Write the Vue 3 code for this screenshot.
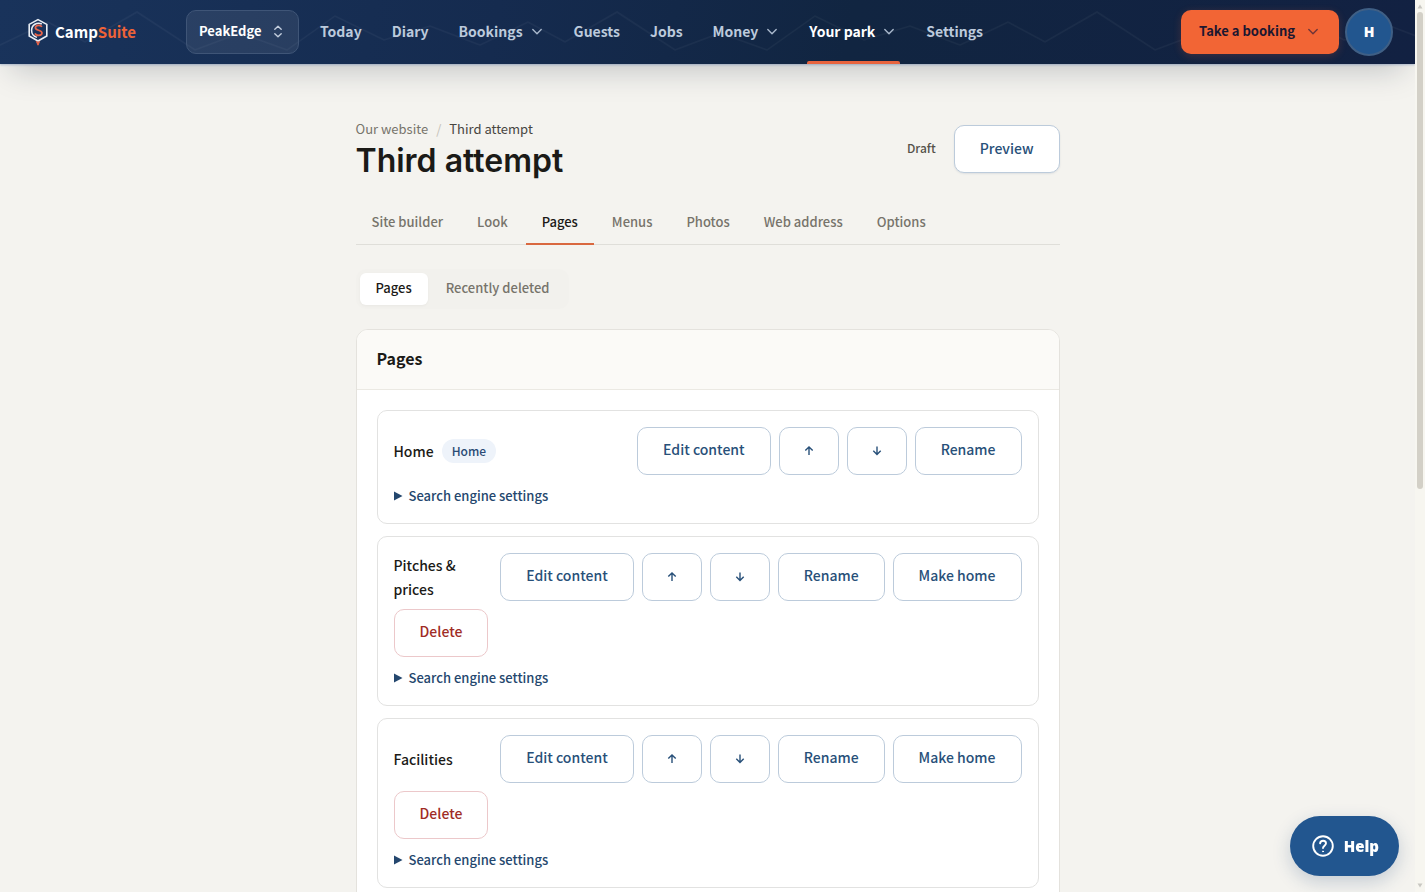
<script setup>
const nav = [
  { label: 'Today' },
  { label: 'Diary' },
  { label: 'Bookings', menu: true },
  { label: 'Guests' },
  { label: 'Jobs' },
  { label: 'Money', menu: true },
  { label: 'Your park', menu: true, active: true },
  { label: 'Settings' },
]
const tabs = ['Site builder', 'Look', 'Pages', 'Menus', 'Photos', 'Web address', 'Options']
const pages = [
  { name: 'Home', home: true },
  { name: 'Pitches & prices' },
  { name: 'Facilities' },
]
</script>

<template>
  <div class="app">
    <header class="topbar">
      <svg class="ridge" aria-hidden="true">
        <defs>
          <pattern id="ridge" width="480" height="64" patternUnits="userSpaceOnUse">
            <path d="M0 45 L48 22 L85 42 L137 12 L195 50 L240 33 L287 50 L335 16 L384 40 L430 26 L480 45" />
          </pattern>
        </defs>
        <rect width="100%" height="64" fill="url(#ridge)" />
      </svg>
      <a class="brand" href="#">
        <svg width="22" height="28" viewBox="0 0 22 28" fill="none" aria-hidden="true">
          <path d="M11 1.6 L19.8 6.4 V18 L11 23 L2.2 18 V6.4 Z" stroke="#e9eef5" stroke-width="1.6" />
          <path d="M14.8 6 C10 3.6 4.6 7 4.6 12.2 C4.6 16 7 18.6 10 19.4" stroke="#e9eef5" stroke-width="1.5" />
          <path d="M14.8 9 C13.8 6.6 8.4 6.7 8.4 9.7 C8.4 12.8 15 11.6 15 15 C15 18 9 18.2 8 15.4" stroke="#e8644a" stroke-width="1.7" />
          <path d="M9.4 23.4 L11 24.4 L12.6 23.4 L11 27.2 Z" fill="#e8644a" stroke="#e8644a" />
        </svg>
        <span>Camp<span class="accent">Suite</span></span>
      </a>
      <button class="park" type="button">
        PeakEdge
        <svg width="10" height="14" viewBox="0 0 10 14" fill="none" stroke="currentColor" stroke-width="1.4" stroke-linecap="round" stroke-linejoin="round" aria-hidden="true">
          <path d="M1.8 5.2 L5 2.2 L8.2 5.2 M1.8 9.8 L5 12.8 L8.2 9.8" />
        </svg>
      </button>
      <nav class="nav" aria-label="Main">
        <a v-for="n in nav" :key="n.label" href="#" :class="{ active: n.active, menu: n.menu }">
          {{ n.label }}
          <svg v-if="n.menu" class="chev" width="12" height="12" viewBox="0 0 12 12" aria-hidden="true"><path d="M1.8 4.6 L6 8.8 L10.2 4.6" /></svg>
        </a>
      </nav>
      <button class="book" type="button">
        Take a booking
        <svg class="chev" width="12" height="12" viewBox="0 0 12 12" aria-hidden="true"><path d="M1.8 4.6 L6 8.8 L10.2 4.6" /></svg>
      </button>
      <button class="avatar" type="button" aria-label="Account">H</button>
    </header>

    <main class="main">
      <div class="head">
        <div>
          <div class="crumbs"><a href="#">Our website</a><span class="sep">/</span><span>Third attempt</span></div>
          <h1>Third attempt</h1>
        </div>
        <div class="head-side">
          <span class="draft">Draft</span>
          <button class="btn preview" type="button">Preview</button>
        </div>
      </div>

      <nav class="tabs" aria-label="Website">
        <a v-for="t in tabs" :key="t" href="#" :class="{ active: t === 'Pages' }">{{ t }}</a>
      </nav>

      <div class="segment">
        <button type="button" class="on">Pages</button>
        <button type="button">Recently deleted</button>
      </div>

      <section class="card">
        <h2>Pages</h2>
        <ul>
          <li v-for="p in pages" :key="p.name">
            <div class="row">
              <div class="name">{{ p.name }}<span v-if="p.home" class="badge">Home</span></div>
              <button class="btn" type="button">Edit content</button>
              <button class="btn" type="button" aria-label="Move up">
                <svg class="arrow" width="8" height="16" viewBox="1 0 8 16" aria-hidden="true"><path d="M5 14 V6 M1.3 9.6 L5 5.9 L8.7 9.6" /></svg>
              </button>
              <button class="btn" type="button" aria-label="Move down">
                <svg class="arrow" width="8" height="16" viewBox="1 0 8 16" aria-hidden="true"><path d="M5 5.4 V13.4 M1.3 9.8 L5 13.5 L8.7 9.8" /></svg>
              </button>
              <button class="btn" type="button">Rename</button>
              <template v-if="!p.home">
                <button class="btn" type="button">Make home</button>
                <button class="btn danger" type="button">Delete</button>
              </template>
            </div>
            <details>
              <summary>
                <svg width="9" height="10" viewBox="0 0 9 10" aria-hidden="true"><path d="M0 0.5 L8.5 5 L0 9.5 Z" /></svg>
                Search engine settings
              </summary>
            </details>
          </li>
        </ul>
      </section>
    </main>

    <button class="help" type="button">
      <svg width="22" height="22" viewBox="0 0 22 22" fill="none" stroke="#fff" stroke-width="1.9" stroke-linecap="round" aria-hidden="true">
        <circle cx="11" cy="11" r="9.8" />
        <path d="M8.1 8.4 C8.3 4.8 14 4.9 14 8.3 C14 10.6 11 10.8 11 13.1" />
        <circle cx="11" cy="16.4" r="0.5" fill="#fff" stroke-width="1" />
      </svg>
      Help
    </button>

    <div class="scroll" aria-hidden="true">
      <svg width="6" height="5" viewBox="0 0 6 5"><path d="M3 0.5 L5.5 4.5 H0.5 Z" /></svg>
      <div class="track"><div class="thumb"></div></div>
      <svg width="6" height="5" viewBox="0 0 6 5"><path d="M3 4.5 L5.5 0.5 H0.5 Z" /></svg>
    </div>
  </div>
</template>

<style>
body {
  background: #f4f3ee;
}
</style>

<style scoped>
* {
  box-sizing: border-box;
}
.app {
  height: 100vh;
  overflow: hidden;
  padding-right: 10px;
  background: #f4f3ef;
  color: #1b1a17;
  font-family: "Noto Sans CJK SC", "Noto Sans", sans-serif;
  font-size: 14px;
  line-height: 20px;
}
a {
  color: inherit;
  text-decoration: none;
}
button {
  font: inherit;
  color: inherit;
  cursor: pointer;
  margin: 0;
}
.topbar {
  position: relative;
  display: flex;
  align-items: center;
  height: 64px;
  padding: 0 22px 0 27px;
  background: linear-gradient(100deg, #19335b 0%, #152b4f 35%, #112541 60%, #122142 100%);
  box-shadow: 0 1px 2px rgba(40, 80, 150, 0.3), 0 16px 32px -12px rgba(20, 30, 50, 0.25);
}
.ridge {
  position: absolute;
  inset: 0;
  width: 100%;
  height: 100%;
}
.ridge path {
  fill: none;
  stroke: rgba(255, 255, 255, 0.04);
  stroke-width: 1.5;
}
.topbar > :not(.ridge) {
  position: relative;
}
.brand {
  display: flex;
  align-items: center;
  gap: 6px;
  width: 159px;
  color: #fff;
  font-size: 15px;
  font-weight: 700;
}
.accent {
  color: #ee6338;
}
.park {
  display: flex;
  align-items: center;
  justify-content: space-between;
  width: 113px;
  height: 44px;
  padding: 0 15px 2px 12px;
  border: 1px solid #3f5577;
  border-radius: 10px;
  background: rgba(255, 255, 255, 0.08);
  color: #fff;
  font-size: 13px;
  font-weight: 700;
}
.park svg {
  color: #c3cede;
}
.nav {
  display: flex;
  gap: 2px;
  margin-left: 7px;
  flex: 1;
}
.nav a {
  position: relative;
  display: flex;
  align-items: center;
  gap: 8px;
  height: 64px;
  padding: 0 14px 2px;
  color: #bccadc;
  font-weight: 700;
  white-space: nowrap;
}
.nav a.menu {
  padding-right: 15px;
}
.nav a.active {
  color: #fff;
}
.nav a.active::after {
  content: "";
  position: absolute;
  left: 12px;
  right: 10px;
  bottom: 0;
  height: 3px;
  border-radius: 2px 2px 0 0;
  background: #e8643f;
}
.chev {
  fill: none;
  stroke: #a9b8cc;
  stroke-width: 1.4;
  stroke-linecap: round;
  stroke-linejoin: round;
}
.book {
  display: flex;
  align-items: center;
  justify-content: space-between;
  width: 158px;
  height: 44px;
  padding: 0 20px 2px 18px;
  border: 0;
  border-radius: 10px;
  background: #f26535;
  color: #1c1730;
  font-size: 13px;
  font-weight: 700;
  white-space: nowrap;
  box-shadow: 0 2px 8px rgba(242, 101, 53, 0.2);
}
.book .chev {
  stroke: #6e3438;
}
.avatar {
  width: 48px;
  height: 48px;
  margin-left: 6px;
  padding: 0;
  border: 2px solid #3f5f85;
  border-radius: 50%;
  background: #22568f;
  color: #fff;
  font-family: "Open Sans", sans-serif;
  font-weight: 800;
}
.main {
  max-width: 768px;
  margin: 0 auto;
  padding: 56px 32px 0;
}
.head {
  display: flex;
  align-items: flex-start;
  justify-content: space-between;
}
.crumbs {
  display: flex;
  gap: 8px;
  font-size: 13px;
  line-height: 18px;
  color: #47453f;
}
.crumbs a {
  color: #77746b;
}
.sep {
  color: #c4c1b8;
}
h1 {
  margin: 3px 0 0;
  font-family: Inter, sans-serif;
  font-size: 32px;
  line-height: 40px;
  font-weight: 600;
}
.head-side {
  display: flex;
  align-items: center;
  gap: 18px;
  margin-top: 5px;
}
.draft {
  padding-bottom: 2px;
  font-size: 12px;
  font-weight: 500;
  color: #55524a;
}
.btn {
  display: flex;
  align-items: center;
  justify-content: center;
  height: 48px;
  padding: 0 25px 4px;
  border: 1px solid #bccbdb;
  border-radius: 10px;
  background: #fff;
  color: #285079;
  font-size: 14px;
  font-weight: 500;
  white-space: nowrap;
}
.preview {
  padding-bottom: 2px;
  box-shadow: 0 1px 2px rgba(30, 60, 100, 0.1);
}
.danger {
  border-color: #ecc8ca;
  color: #9f2c26;
}
.arrow {
  overflow: visible;
  fill: none;
  stroke: #285079;
  stroke-width: 1.4;
}
.tabs {
  display: flex;
  gap: 2px;
  margin-top: 21px;
  border-bottom: 1px solid #dfded9;
}
.tabs a {
  position: relative;
  padding: 10px 16px 12px;
  color: #77746b;
  font-size: 13px;
  font-weight: 500;
  white-space: nowrap;
}
.tabs a.active,
.segment .on {
  color: #1b1a17;
}
.tabs a.active::after {
  content: "";
  position: absolute;
  left: 0;
  right: 0;
  bottom: -1px;
  height: 2px;
  background: #d9683f;
}
.segment {
  display: inline-flex;
  gap: 2px;
  margin-top: 24px;
  padding: 4px;
  border-radius: 10px;
  background: #f2f1ed;
  vertical-align: top;
}
.segment button {
  height: 32px;
  padding: 0 16px 2px;
  border: 0;
  border-radius: 6px;
  background: transparent;
  color: #77746b;
  font-size: 13px;
  font-weight: 500;
}
.segment .on {
  background: #fff;
  box-shadow: 0 1px 3px rgba(0, 0, 0, 0.04);
}
.card {
  margin-top: 20px;
  border: 1px solid #e4e2dd;
  border-radius: 12px;
  background: #fff;
  overflow: hidden;
}
h2 {
  margin: 0;
  padding: 16px 20px 19px;
  border-bottom: 1px solid #ebe9e3;
  background: #fbfaf7;
  font-size: 16px;
  line-height: 24px;
  font-weight: 700;
}
ul {
  display: grid;
  gap: 12px;
  margin: 0;
  padding: 20px;
  list-style: none;
}
li {
  padding: 16px 16px 17px;
  border: 1px solid #e2e2e1;
  border-radius: 10px;
}
.row {
  display: flex;
  flex-wrap: wrap;
  align-items: center;
  gap: 8px;
}
.name {
  display: flex;
  align-items: center;
  gap: 8px;
  flex: 1 1 0;
  min-width: 90px;
  font-weight: 500;
  line-height: 24px;
}
.badge {
  padding: 2px 10px;
  border-radius: 12px;
  background: #eef3fa;
  color: #2a4a75;
  font-size: 12px;
  line-height: 20px;
}
details {
  margin-top: 11px;
}
summary {
  display: flex;
  align-items: center;
  gap: 6px;
  list-style: none;
  color: #24476e;
  font-size: 13px;
  font-weight: 500;
  cursor: pointer;
}
summary path {
  fill: #24476e;
}
.help {
  position: fixed;
  right: 26px;
  bottom: 16px;
  display: flex;
  align-items: center;
  gap: 10px;
  height: 60px;
  padding: 0 20px 0 22px;
  border: 0;
  border-radius: 30px;
  background: #22568f;
  color: #fff;
  font-family: "Open Sans", sans-serif;
  font-size: 15px;
  font-weight: 800;
  box-shadow: 0 6px 18px rgba(34, 70, 120, 0.22);
}
.scroll {
  position: fixed;
  top: 0;
  right: 0;
  bottom: 0;
  width: 10px;
  display: flex;
  flex-direction: column;
  align-items: center;
  padding: 4px 0;
  background: #f7f6f0;
}
.scroll path {
  fill: #c9c8c2;
}
.track {
  flex: 1;
  padding: 3px 0;
}
.thumb {
  width: 6px;
  height: 55%;
  border-radius: 3px;
  background: #d3d0c7;
}
</style>
